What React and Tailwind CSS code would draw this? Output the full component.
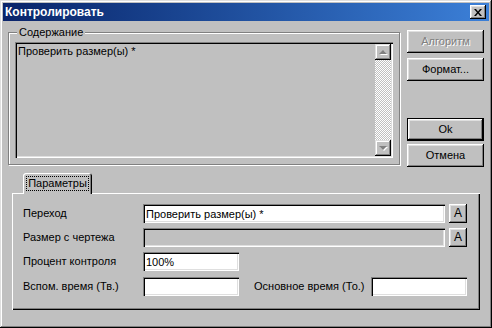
import React from "react";

const raised =
  "shadow-[inset_-1px_-1px_#000,inset_1px_1px_#fff,inset_-2px_-2px_#808080,inset_2px_2px_#dfdfdf]";
const sunken =
  "shadow-[inset_1px_1px_#808080,inset_2px_2px_#000,inset_-1px_-1px_#fff,inset_-2px_-2px_#dfdfdf]";

function Arrow({ up }) {
  return (
    <svg width="9" height="6" viewBox="0 0 9 6">
      {up ? (
        <>
          <polygon points="5,2 9,6 1,6" fill="#fff" />
          <polygon points="4,1 8,5 0,5" fill="#808080" />
        </>
      ) : (
        <>
          <polygon points="1,2 9,2 5,6" fill="#fff" />
          <polygon points="0,1 8,1 4,5" fill="#808080" />
        </>
      )}
    </svg>
  );
}

function Btn({ children, disabled, def }) {
  if (def) {
    return (
      <div className="w-[77px] h-[23px] border border-black">
        <div
          className={
            "w-full h-full flex items-center justify-center bg-[#c0c0c0] shadow-[inset_-1px_-1px_#000,inset_1px_1px_#fff,inset_-2px_-2px_#808080,inset_2px_2px_#dfdfdf]"
          }
        >
          {children}
        </div>
      </div>
    );
  }
  return (
    <div
      className={
        "w-[77px] h-[23px] flex items-center justify-center bg-[#c0c0c0] shadow-[inset_-1px_-1px_#000,inset_1px_1px_#fff,inset_-2px_-2px_#808080,inset_2px_2px_#dfdfdf] " +
        (disabled ? "text-[#808080] [text-shadow:1px_1px_#fff]" : "")
      }
    >
      {children}
    </div>
  );
}

function ABtn() {
  return (
    <div className="ml-[4px] w-[18px] h-[19px] flex items-center justify-center text-[12px] bg-[#c0c0c0] shadow-[inset_-1px_-1px_#000,inset_1px_1px_#fff,inset_-2px_-2px_#808080,inset_2px_2px_#dfdfdf]">
      A
    </div>
  );
}

function Input({ w, value, disabled }) {
  return (
    <div
      className={
        w +
        " h-[19px] flex items-center pl-[3px] pt-[1px] whitespace-nowrap overflow-hidden shadow-[inset_1px_1px_#808080,inset_2px_2px_#000,inset_-1px_-1px_#fff,inset_-2px_-2px_#dfdfdf] " +
        (disabled ? "bg-[#c0c0c0]" : "bg-white")
      }
    >
      {value}
    </div>
  );
}

export default function App() {
  return (
    <div className="w-[492px] h-[328px] bg-[#c0c0c0] p-[3px] flex flex-col overflow-hidden text-[11px] leading-[13px] text-black font-['Liberation_Sans',Arial,sans-serif] shadow-[inset_-1px_-1px_#000,inset_1px_1px_#dfdfdf,inset_-2px_-2px_#808080,inset_2px_2px_#fff]">
      {/* Title bar */}
      <div className="h-[18px] flex items-center justify-between pl-[2px] pr-[3px] bg-linear-to-r from-[#0a246a] to-[#3c80d8]">
        <span className="text-white font-bold text-[12px] leading-[14px]">Контролировать</span>
        <div className="w-[16px] h-[14px] flex items-center justify-center bg-[#c0c0c0] shadow-[inset_-1px_-1px_#000,inset_1px_1px_#fff,inset_-2px_-2px_#808080,inset_2px_2px_#dfdfdf]">
          <svg width="8" height="7" viewBox="0 0 8 7">
            <path d="M0 0h2l2 2.5L6 0h2L5 3.5L8 7H6L4 4.5L2 7H0l3-3.5z" fill="#000" />
          </svg>
        </div>
      </div>

      {/* Top row */}
      <div className="flex items-start pl-[5px]">
        <div className="relative mt-[11px] w-[392px] h-[133px] border border-[#808080] shadow-[inset_1px_1px_#fff,1px_1px_#fff] pl-[6px] pt-[9px]">
          <span className="absolute left-[8px] top-[-8px] px-[2px] bg-[#c0c0c0] leading-[14px]">
            Содержание
          </span>
          <div className="w-[378px] h-[116px] p-[2px] flex shadow-[inset_1px_1px_#808080,inset_2px_2px_#000,inset_-1px_-1px_#fff,inset_-2px_-2px_#dfdfdf]">
            <div className="flex-1 pl-[1px] pt-[1px]">Проверить размер(ы) *</div>
            <div className="w-[16px] flex flex-col">
              <div className="h-[16px] flex items-center justify-center bg-[#c0c0c0] shadow-[inset_-1px_-1px_#000,inset_1px_1px_#dfdfdf,inset_-2px_-2px_#808080,inset_2px_2px_#fff]">
                <Arrow up />
              </div>
              <div className="flex-1 bg-[image:repeating-conic-gradient(#fff_0%_25%,#c0c0c0_0%_50%)] bg-[length:2px_2px]" />
              <div className="h-[16px] flex items-center justify-center bg-[#c0c0c0] shadow-[inset_-1px_-1px_#000,inset_1px_1px_#dfdfdf,inset_-2px_-2px_#808080,inset_2px_2px_#fff]">
                <Arrow />
              </div>
            </div>
          </div>
        </div>

        <div className="ml-[7px] mt-[9px] flex flex-col">
          <Btn disabled>Алгоритм</Btn>
          <div className="mt-[5px]">
            <Btn>Формат...</Btn>
          </div>
          <div className="mt-[37px]">
            <Btn def>Ok</Btn>
          </div>
          <div className="mt-[3px]">
            <Btn>Отмена</Btn>
          </div>
        </div>
      </div>

      {/* Tab strip */}
      <div className="mt-[6px] pl-[20px] flex relative z-10">
        <div className="w-[69px] h-[21px] -mb-[1px] bg-[#c0c0c0] rounded-t-[3px] flex items-start justify-center pt-[3px] shadow-[inset_1px_1px_#fff,inset_-1px_0_#000,inset_-2px_0_#808080]">
          <span className="border border-dotted border-black px-[1px] leading-[13px]">Параметры</span>
        </div>
      </div>

      {/* Tab panel */}
      <div className="ml-[9px] w-[468px] h-[117px] pl-[11px] pt-[11px] flex flex-col shadow-[inset_1px_1px_#fff,inset_-1px_-1px_#000,inset_-2px_-2px_#808080]">
        <div className="flex items-center h-[19px]">
          <span className="w-[120px]">Переход</span>
          <Input w="w-[302px]" value="Проверить размер(ы) *" />
          <ABtn />
        </div>
        <div className="flex items-center h-[19px] mt-[5px]">
          <span className="w-[120px]">Размер с чертежа</span>
          <Input w="w-[302px]" value="" disabled />
          <ABtn />
        </div>
        <div className="flex items-center h-[19px] mt-[5px]">
          <span className="w-[120px]">Процент контроля</span>
          <Input w="w-[96px]" value="100%" />
        </div>
        <div className="flex items-center h-[19px] mt-[6px]">
          <span className="w-[120px]">Вспом. время (Тв.)</span>
          <Input w="w-[96px]" value="" />
          <span className="ml-[15px] w-[117px]">Основное время (То.)</span>
          <Input w="w-[96px]" value="" />
        </div>
      </div>
    </div>
  );
}
